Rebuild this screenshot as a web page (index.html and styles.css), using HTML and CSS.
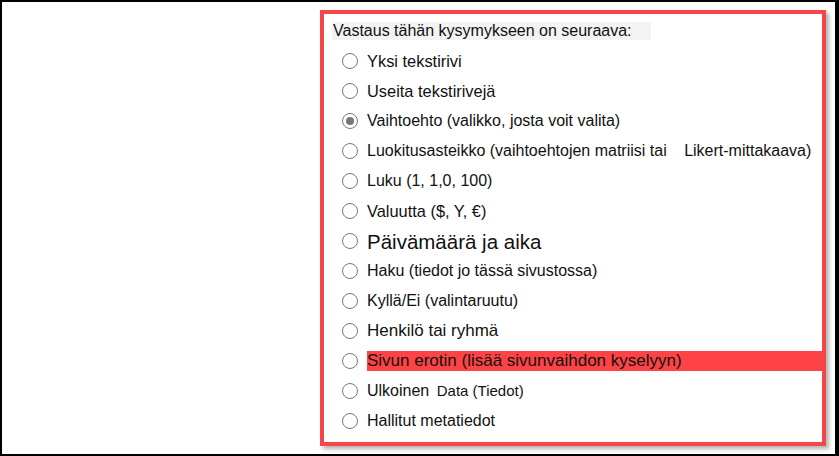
FILE: index.html
```html
<!DOCTYPE html>
<html lang="fi">
<head>
<meta charset="utf-8">
<link rel="stylesheet" href="styles.css">
</head>
<body>
<div class="frame">
  <div class="panel">
    <div class="header"><span>Vastaus tähän kysymykseen on seuraava:</span></div>
    <ul class="options">
      <li class="opt"><span class="radio"></span><span class="label mid">Yksi tekstirivi</span></li>
      <li class="opt"><span class="radio"></span><span class="label mid">Useita tekstirivejä</span></li>
      <li class="opt"><span class="radio checked"></span><span class="label">Vaihtoehto (valikko, josta voit valita)</span></li>
      <li class="opt"><span class="radio"></span><span class="label">Luokitusasteikko (vaihtoehtojen matriisi tai <span class="gap"></span>Likert-mittakaava)</span></li>
      <li class="opt"><span class="radio"></span><span class="label">Luku (1, 1,0, 100)</span></li>
      <li class="opt"><span class="radio"></span><span class="label mid">Valuutta ($, Y, €)</span></li>
      <li class="opt"><span class="radio"></span><span class="label big">Päivämäärä ja aika</span></li>
      <li class="opt"><span class="radio"></span><span class="label">Haku (tiedot jo tässä sivustossa)</span></li>
      <li class="opt"><span class="radio"></span><span class="label">Kyllä/Ei (valintaruutu)</span></li>
      <li class="opt"><span class="radio"></span><span class="label large">Henkilö tai ryhmä</span></li>
      <li class="opt"><span class="radio"></span><span class="label large highlight">Sivun erotin (lisää sivunvaihdon kyselyyn)</span></li>
      <li class="opt"><span class="radio"></span><span class="label">Ulkoinen <span class="small">Data (Tiedot)</span></span></li>
      <li class="opt"><span class="radio"></span><span class="label">Hallitut metatiedot</span></li>
    </ul>
  </div>
</div>
</body>
</html>
```

FILE: styles.css
```css
html, body {
  margin: 0;
  padding: 0;
  background: #fff;
}

.frame {
  width: 839px;
  height: 456px;
  box-sizing: border-box;
  border-top: 2px solid #000;
  border-left: 2px solid #000;
  border-right: 4px solid #000;
  border-bottom: 2px solid #000;
  padding: 8px 0 0 318px;
  font-family: "Liberation Sans", Arial, sans-serif;
  color: #111;
}

.panel {
  width: 506px;
  height: 436px;
  box-sizing: border-box;
  border: 4px solid #f54649;
  box-shadow: 3px 3px 4px rgba(0, 0, 0, 0.3);
  padding: 8px 0 0 0;
  background: #fff;
}

.header {
  margin-left: 8px;
  width: 319px;
  height: 18px;
  background: #f3f3f3;
  font-size: 16px;
  line-height: 18px;
  padding-left: 1px;
  box-sizing: border-box;
  white-space: nowrap;
}

.options {
  list-style: none;
  margin: 6px 0 0 0;
  padding: 0;
}

.opt {
  display: flex;
  align-items: center;
  height: 30px;
  padding-left: 18px;
}

.radio {
  flex: none;
  width: 16px;
  height: 16px;
  box-sizing: border-box;
  border: 1.6px solid #777;
  border-radius: 50%;
  margin-right: 9px;
  display: flex;
  align-items: center;
  justify-content: center;
}

.radio.checked::after {
  content: "";
  width: 8px;
  height: 8px;
  border-radius: 50%;
  background: #777;
}

.label {
  flex: 1;
  font-size: 16px;
  line-height: 20px;
  white-space: nowrap;
}

.label.mid {
  font-size: 16.4px;
}

.label.large {
  font-size: 17px;
}

.label.big {
  font-size: 20.5px;
  position: relative;
  top: 1px;
}

.label.highlight {
  background: #fd4346;
}

.gap {
  display: inline-block;
  width: 13px;
}

.small {
  font-size: 15px;
  margin-left: 3px;
}
```
